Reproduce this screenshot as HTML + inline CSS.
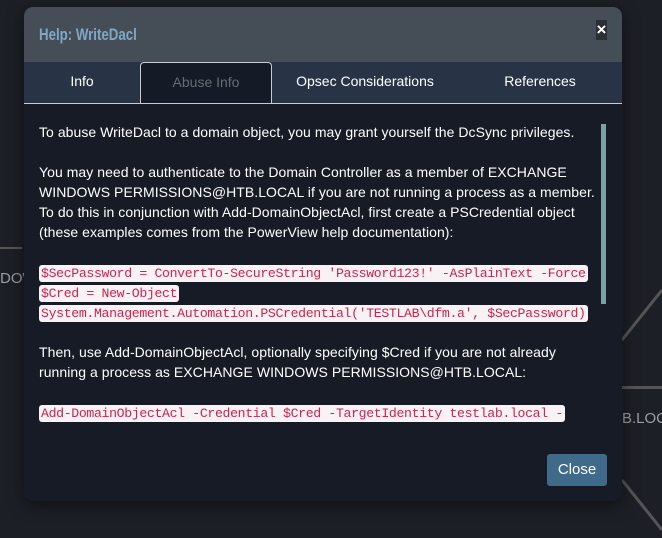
<!DOCTYPE html><html><head><style>
body{margin:0;width:662px;height:538px;background:#1c1f25;position:relative;overflow:hidden;font-family:"Liberation Sans",sans-serif}
.bg{position:absolute;color:#9a9da2;font-size:15px}
.m{position:absolute;left:24px;top:7px;width:598px;height:494px;background:#161b26;border-radius:9px;overflow:hidden;box-shadow:0 4px 16px rgba(0,0,0,.5)}
.h{height:55px;background:#454d57;position:relative}
.h span{position:absolute;left:15px;top:18px;color:#7ea8c4;font-weight:bold;font-size:17px;transform:scaleX(.78);transform-origin:left;white-space:nowrap}
.x{position:absolute;right:15px;top:13px;width:11px;height:20px;background:#2b2e33;color:#fff;font-weight:bold;font-size:17px;line-height:20px;text-align:center}
.t{height:41px;background:#283446;position:relative;border-bottom:1px solid #c8ccd2}
.tab{position:absolute;top:0;height:41px;line-height:38px;text-align:center;color:#fff;font-size:14px}
.act{background:#151b26;border:1px solid #c8ccd2;border-bottom:none;border-radius:4px 4px 0 0;color:#666b73;height:41px;box-sizing:border-box;z-index:2}
.b{position:absolute;left:15px;top:115px;width:565px;color:#fff;font-size:14px;line-height:20px;letter-spacing:.05px}
p{margin:0 0 20px}
.c{height:60px;line-height:20px}
code{font-family:"Liberation Mono",monospace;font-size:13.2px;line-height:14px;color:#c7254e;background:#f9f2f4;padding:1px 2px;border-radius:3px;letter-spacing:-.35px}
.sb{position:absolute;left:577px;top:117px;width:5px;height:180px;background:#7ba0a5}
.btn{position:absolute;left:523px;top:447px;width:60px;height:32px;background:#3f6a89;border-radius:3px;color:#fff;font-size:15px;line-height:32px;text-align:center}
</style></head><body>
<div style="position:absolute;left:0;top:247px;width:22px;height:2px;background:#555"></div>
<div class="bg" style="left:0;top:270px">DOW</div>
<div style="position:absolute;left:622px;top:386px;width:40px;height:3px;background:#555"></div>
<div class="bg" style="left:622px;top:410px">B.LOCAL</div>
<svg style="position:absolute;left:0;top:0" width="662" height="538"><path d="M622 340L662 290M622 480L662 530" stroke="#555" stroke-width="3"/></svg>
<div class="m">
<div class="h"><span>Help: WriteDacl</span><div class="x">×</div></div>
<div class="t">
<div class="tab" style="left:0;width:116px">Info</div>
<div class="tab act" style="left:116px;width:132px">Abuse Info</div>
<div class="tab" style="left:248px;width:186px">Opsec Considerations</div>
<div class="tab" style="left:434px;width:164px">References</div>
</div>
<div class="b">
<p>To abuse WriteDacl to a domain object, you may grant yourself the DcSync privileges.</p>
<p>You may need to authenticate to the Domain Controller as a member of EXCHANGE WINDOWS PERMISSIONS@HTB.LOCAL if you are not running a process as a member.<br>To do this in conjunction with Add-DomainObjectAcl, first create a PSCredential object<br>(these examples comes from the PowerView help documentation):</p>
<p class="c"><code>$SecPassword = ConvertTo-SecureString 'Password123!' -AsPlainText -Force</code><br><code>$Cred = New-Object</code><br><code>System.Management.Automation.PSCredential('TESTLAB\dfm.a', $SecPassword)</code></p>
<p>Then, use Add-DomainObjectAcl, optionally specifying $Cred if you are not already<br>running a process as EXCHANGE WINDOWS PERMISSIONS@HTB.LOCAL:</p>
<p><code>Add-DomainObjectAcl -Credential $Cred -TargetIdentity testlab.local -</code></p>
</div>
<div class="sb"></div>
<div class="btn">Close</div>
</div>
</body></html>
